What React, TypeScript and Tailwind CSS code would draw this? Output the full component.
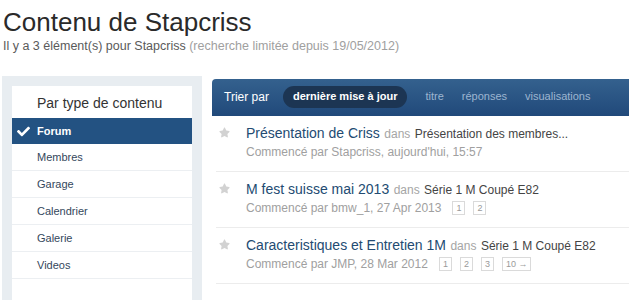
import React from "react";
import { FaCheck, FaStar } from "react-icons/fa";

const cats = ["Membres", "Garage", "Calendrier", "Galerie", "Videos"];

type Row = {
  title: string;
  forum: string;
  meta: string;
  pages: string[];
};

const rows: Row[] = [
  {
    title: "Présentation de Criss",
    forum: "Présentation des membres...",
    meta: "Commencé par Stapcriss, aujourd'hui, 15:57",
    pages: [],
  },
  {
    title: "M fest suisse mai 2013",
    forum: "Série 1 M Coupé E82",
    meta: "Commencé par bmw_1, 27 Apr 2013",
    pages: ["1", "2"],
  },
  {
    title: "Caracteristiques et Entretien 1M",
    forum: "Série 1 M Coupé E82",
    meta: "Commencé par JMP, 28 Mar 2012",
    pages: ["1", "2", "3", "10 →"],
  },
];

export default function App() {
  return (
    <div className="w-[629px] h-[300px] overflow-hidden bg-white font-[Liberation_Sans,Arial,sans-serif]">
      <div className="pl-[3px] pt-[7px]">
        <h1 className="text-[26px] leading-[30px] text-[#2a2a2a]">Contenu de Stapcriss</h1>
        <p className="text-[12.5px] leading-[18px] text-[#5a5a5a]">
          Il y a 3 élément(s) pour Stapcriss{" "}
          <span className="text-[#a0a0a0]">(recherche limitée depuis 19/05/2012)</span>
        </p>
      </div>

      <div className="flex mt-[21px]">
        <aside className="ml-[2px] w-[200px] h-[230px] shrink-0 bg-[#e8edf1] px-[10px] pt-[10px]">
          <div className="bg-white h-full">
            <div className="h-[32px] pl-[25px] pt-[3px] flex items-center text-[14px] text-[#333]">
              Par type de contenu
            </div>
            <div className="h-[26px] bg-[#235282] flex items-center text-white text-[11px] font-bold">
              <FaCheck className="ml-[5px] mr-[7px] w-[13px] h-[13px]" />
              <span>Forum</span>
            </div>
            {cats.map((c) => (
              <div
                key={c}
                className="h-[27px] pl-[25px] flex items-center border-b border-[#eceff2] text-[11px] text-[#34475c]"
              >
                {c}
              </div>
            ))}
          </div>
        </aside>

        <main className="ml-[10px] flex-1 min-w-0 mt-[3px]">
          <div className="h-[37px] pb-[2px] rounded-tl-[4px] bg-gradient-to-b from-[#34618e] to-[#21497a] flex items-center pl-[12px]">
            <span className="text-[12px] text-white">Trier par</span>
            <span className="ml-[14px] h-[22px] px-[10px] rounded-full bg-[#1c3553] text-white text-[11px] font-bold flex items-center">
              dernière mise à jour
            </span>
            <span className="ml-[18px] text-[11px] text-[#9db5d0]">titre</span>
            <span className="ml-[18px] text-[11px] text-[#9db5d0]">réponses</span>
            <span className="ml-[18px] text-[11px] text-[#9db5d0]">visualisations</span>
          </div>

          {rows.map((r) => (
            <div key={r.title} className="ml-[4px] flex pt-[7px] pb-[10px] border-b border-[#ececec]">
              <div className="w-[30px] shrink-0 pl-[3px] pt-[4px]">
                <FaStar className="w-[11px] h-[11px] text-[#d2d2d2]" />
              </div>
              <div className="min-w-0">
                <div className="h-[20px] leading-[20px] whitespace-nowrap">
                  <span className="text-[14px] text-[#234b72]">{r.title}</span>{" "}
                  <span className="text-[12px] text-[#a5a5a5]">dans</span>{" "}
                  <span className="text-[12px] text-[#444]">{r.forum}</span>
                </div>
                <div className="h-[18px] flex items-center whitespace-nowrap text-[12px] text-[#a0a0a0]">
                  <span>{r.meta}</span>
                  {r.pages.length > 0 && (
                    <span className="flex gap-[8px] ml-[11px]">
                      {r.pages.map((p) => (
                        <span
                          key={p}
                          className="h-[14px] px-[3px] border border-[#dadada] text-[9px] leading-[12px] text-[#9a9a9a] flex items-center"
                        >
                          {p}
                        </span>
                      ))}
                    </span>
                  )}
                </div>
              </div>
            </div>
          ))}
        </main>
      </div>
    </div>
  );
}
